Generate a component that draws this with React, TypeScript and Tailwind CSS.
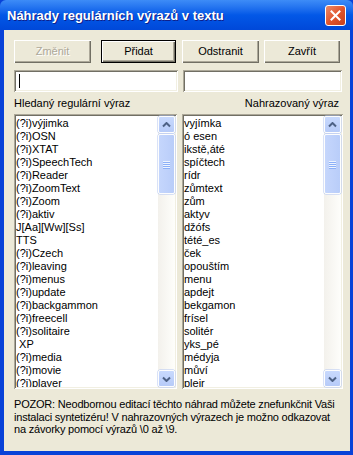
import React from "react";

const leftItems = [
  "(?i)výjimka",
  "(?i)OSN",
  "(?i)XTAT",
  "(?i)SpeechTech",
  "(?i)Reader",
  "(?i)ZoomText",
  "(?i)Zoom",
  "(?i)aktiv",
  "J[Aa][Ww][Ss]",
  "TTS",
  "(?i)Czech",
  "(?i)leaving",
  "(?i)menus",
  "(?i)update",
  "(?i)backgammon",
  "(?i)freecell",
  "(?i)solitaire",
  "\u00a0XP",
  "(?i)media",
  "(?i)movie",
  "(?i)player",
];

const rightItems = [
  "vyjímka",
  "ó esen",
  "ikstě,áté",
  "spíčtech",
  "rídr",
  "zůmtext",
  "zům",
  "aktyv",
  "džófs",
  "tété_es",
  "ček",
  "opouštím",
  "menu",
  "apdejt",
  "bekgamon",
  "frísel",
  "solitér",
  "yks_pé",
  "médyja",
  "můví",
  "plejr",
];

const sunken =
  "shadow-[inset_1px_1px_#aca899,inset_-1px_-1px_#ffffff,inset_2px_2px_#716f64,inset_-2px_-2px_#f1efe2]";

function Button({ label, disabled, isDefault, width }: { label: string; disabled?: boolean; isDefault?: boolean; width: string }) {
  if (isDefault) {
    return (
      <div className={`${width} h-[23px] border border-black`}>
        <div className="h-full w-full flex items-center justify-center bg-[#ece9d8] shadow-[inset_1px_1px_#ffffff,inset_-1px_-1px_#716f64,inset_-2px_-2px_#aca899] text-black">
          {label}
        </div>
      </div>
    );
  }
  return (
    <div
      className={`${width} h-[23px] flex items-center justify-center bg-[#ece9d8] shadow-[inset_1px_1px_#ffffff,inset_-1px_-1px_#716f64,inset_-2px_-2px_#aca899] ${
        disabled ? "text-[#aca899] [text-shadow:1px_1px_#ffffff]" : "text-black"
      }`}
    >
      {label}
    </div>
  );
}

function ArrowBtn({ down }: { down?: boolean }) {
  return (
    <div className="h-[17px] w-[17px] rounded-[2px] border border-[#fdfdfd] bg-gradient-to-b from-[#c8d9fd] to-[#b7cbf8] flex items-center justify-center shadow-[0_0_0_0.5px_#b4c6f1]">
      <svg width="9" height="6" viewBox="0 0 9 6">
        <path
          d={down ? "M1 1.5 L4.5 5 L8 1.5" : "M1 4.5 L4.5 1 L8 4.5"}
          fill="none"
          stroke="#4d6185"
          strokeWidth="2"
        />
      </svg>
    </div>
  );
}

function ScrollBar() {
  return (
    <div className="w-[17px] h-full flex flex-col bg-gradient-to-r from-[#f3f1ec] to-[#fefefb]">
      <ArrowBtn />
      <div className="flex-1 pt-[1px]">
        <div className="h-[60px] rounded-[2px] border border-[#fdfdfd] bg-gradient-to-r from-[#c5d6fc] to-[#b9cdf9] shadow-[0_0_0_0.5px_#b4c6f1] flex flex-col items-center justify-center">
          <div className="w-[7px] h-[1px] bg-[#eef4fe] shadow-[0_1px_#8cb0f8]" />
          <div className="w-[7px] h-[1px] bg-[#eef4fe] shadow-[0_1px_#8cb0f8] mt-[1px]" />
          <div className="w-[7px] h-[1px] bg-[#eef4fe] shadow-[0_1px_#8cb0f8] mt-[1px]" />
          <div className="w-[7px] h-[1px] bg-[#eef4fe] shadow-[0_1px_#8cb0f8] mt-[1px]" />
        </div>
      </div>
      <ArrowBtn down />
    </div>
  );
}

function ListBox({ items, width }: { items: string[]; width: string }) {
  return (
    <div className={`${width} h-[275px] bg-white p-[2px] ${sunken}`}>
      <div className="h-full flex">
        <div className="flex-1 overflow-hidden pt-[1px]">
          {items.map((t, i) => (
            <div key={i} className="h-[13px] leading-[13px] whitespace-nowrap">
              {t}
            </div>
          ))}
        </div>
        <ScrollBar />
      </div>
    </div>
  );
}

export default function App() {
  return (
    <div
      className="w-[353px] h-[455px] flex flex-col bg-[#0842d8] text-[11px] text-black overflow-hidden"
      style={{ fontFamily: '"Liberation Sans", Arial, sans-serif' }}
    >
      <div className="h-[30px] shrink-0 flex items-center justify-between pl-[7px] pr-[7px] bg-gradient-to-b from-[#3d8cf7] via-[#0358e7] to-[#0048d9] rounded-t-[6px]">
        <span className="text-white font-bold text-[13px] [text-shadow:1px_1px_#0f1f8a] pt-[1px]">
          Náhrady regulárních výrazů v textu
        </span>
        <div className="w-[21px] h-[21px] rounded-[3px] border border-white bg-gradient-to-br from-[#e98a6a] via-[#e2552c] to-[#c8401d] flex items-center justify-center">
          <svg width="11" height="11" viewBox="0 0 11 11">
            <path d="M1.5 1.5 L9.5 9.5 M9.5 1.5 L1.5 9.5" stroke="#ffffff" strokeWidth="2" strokeLinecap="square" />
          </svg>
        </div>
      </div>
      <div className="flex-1 ml-[4px] mr-[3px] mb-[4px] bg-[#ece9d8] pl-[10px] pt-[10px] flex flex-col">
        <div className="flex">
          <Button label="Změnit" disabled width="w-[77px]" />
          <div className="ml-[10px]">
            <Button label="Přidat" isDefault width="w-[75px]" />
          </div>
          <div className="ml-[6px]">
            <Button label="Odstranit" width="w-[77px]" />
          </div>
          <div className="ml-[5px]">
            <Button label="Zavřít" width="w-[76px]" />
          </div>
        </div>
        <div className="flex mt-[7px]">
          <div className={`w-[164px] h-[22px] bg-white ${sunken} flex items-center pl-[5px]`}>
            <div className="w-[1px] h-[14px] bg-black" />
          </div>
          <div className={`w-[159px] h-[22px] bg-white ml-[5px] ${sunken}`} />
        </div>
        <div className="flex justify-between w-[325px] mt-[4px] h-[14px] leading-[14px]">
          <span>Hledaný regulární výraz</span>
          <span>Nahrazovaný výraz</span>
        </div>
        <div className="flex mt-[4px]">
          <ListBox items={leftItems} width="w-[163px]" />
          <div className="ml-[5px]">
            <ListBox items={rightItems} width="w-[161px]" />
          </div>
        </div>
        <p className="mt-[9px] leading-[12.5px] w-[336px] tracking-[-0.2px] whitespace-nowrap">
          POZOR: Neodbornou editací těchto náhrad můžete znefunkčnit Vaši
          <br />
          instalaci syntetizéru! V nahrazovných výrazech je možno odkazovat
          <br />
          na závorky pomocí výrazů \0 až \9.
        </p>
      </div>
    </div>
  );
}
